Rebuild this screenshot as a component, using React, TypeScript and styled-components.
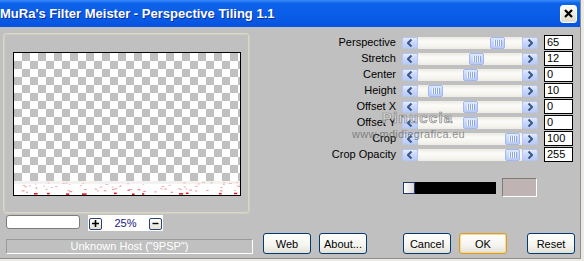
import React from "react";
import styled, { createGlobalStyle } from "styled-components";

const Global = createGlobalStyle`
  html, body { margin: 0; padding: 0; background: #ebeae4; }
  body { font-family: "Liberation Sans", Arial, sans-serif; }
`;

const Page = styled.div`
  width: 584px;
  height: 261px;
  overflow: hidden;
  background: #ebeae4;
`;

const Window = styled.div`
  position: relative;
  width: 580px;
  height: 258px;
  background: #c0c0c0;
  border-right: 1px solid #8d8d8d;
  border-bottom: 1px solid #8d8d8d;
  display: flex;
  flex-direction: column;
`;

const TitleBar = styled.div`
  height: 27px;
  flex: none;
  display: flex;
  align-items: center;
  justify-content: space-between;
  padding-right: 3px;
  background: linear-gradient(180deg, #3a8cf8 0%, #0d62ea 12%, #0a5de6 55%, #0654e0 100%);
`;

const Title = styled.div`
  font-family: "Liberation Sans", Arial, sans-serif;
  font-weight: bold;
  font-size: 13px;
  color: #ffffff;
  text-shadow: 1px 1px 0 #0b2f9c;
  white-space: nowrap;
`;

const CloseButton = styled.div`
  width: 17px;
  height: 18px;
  box-sizing: border-box;
  border: 1px solid #ffffff;
  border-radius: 3px;
  background: linear-gradient(180deg, #fbfaf5 0%, #ece9dd 60%, #ddd9ca 100%);
  display: flex;
  align-items: center;
  justify-content: center;
`;

const Body = styled.div`
  flex: 1;
  display: flex;
  gap: 10px;
  padding-left: 3px;
`;

const LeftCol = styled.div`
  width: 250px;
  display: flex;
  flex-direction: column;
`;

const GroupFrame = styled.div`
  margin-top: 6px;
  width: 246px;
  height: 180px;
  box-sizing: border-box;
  border: 1px solid #d8d7ca;
  border-radius: 3px;
  box-shadow: inset 1px 1px 0 #cdccbd, 1px 1px 0 #cdccbd;
  padding: 18px 8px 0 9px;
`;

const Canvas = styled.div`
  width: 228px;
  height: 144px;
  box-sizing: border-box;
  border: 1px solid #000;
  background: repeating-conic-gradient(#c0c0c0 0 25%, #ffffff 0 50%) 0 0 / 16px 16px;
  display: flex;
  flex-direction: column;
  justify-content: flex-end;
`;

const ZoomRow = styled.div`
  margin-top: 2px;
  padding-left: 3px;
  height: 16px;
  display: flex;
  align-items: flex-start;
`;

const ZoomInput = styled.div`
  width: 74px;
  height: 14px;
  box-sizing: border-box;
  background: #fff;
  border: 1px solid #7c7c7c;
  border-radius: 3px;
`;

const ZoomStrip = styled.div`
  margin-left: 8px;
  width: 75px;
  height: 16px;
  background: #fff;
  display: flex;
  align-items: center;
  justify-content: space-between;
  padding: 0 1px;
  box-sizing: border-box;
`;

const SmallBtn = styled.div`
  width: 13px;
  height: 12px;
  box-sizing: border-box;
  border: 1px solid #28456f;
  border-radius: 2px;
  background: linear-gradient(180deg, #ffffff, #e4e1d6);
  display: flex;
  align-items: center;
  justify-content: center;
  margin-top: 1px;
`;

const Percent = styled.span`
  font-size: 11px;
  color: #17177c;
`;

const Status = styled.div`
  margin-top: 8px;
  margin-left: 3px;
  width: 247px;
  height: 15px;
  box-sizing: border-box;
  border-top: 1px solid #9a9a9a;
  border-left: 1px solid #9a9a9a;
  border-right: 1px solid #ffffff;
  border-bottom: 1px solid #ffffff;
  color: #ffffff;
  font-size: 11px;
  line-height: 13px;
  text-align: center;
`;

const RightCol = styled.div`
  width: 313px;
  display: flex;
  flex-direction: column;
  padding-top: 8px;
`;

const SliderGrid = styled.div`
  display: grid;
  grid-template-columns: 133px 136px 29px;
  column-gap: 6px;
  grid-auto-rows: 15px;
  row-gap: 1px;
  align-items: center;
`;

const Label = styled.div`
  font-size: 11px;
  color: #000;
  text-align: right;
  white-space: nowrap;
  line-height: 15px;
`;

const ScrollBar = styled.div`
  display: flex;
  height: 12px;
  margin-right: 3px;
  width: 136px;
`;

const ArrowBtn = styled.div`
  width: 16px;
  height: 12px;
  flex: none;
  box-sizing: border-box;
  border: 1px solid #b5c7f1;
  border-radius: 2px;
  background: linear-gradient(180deg, #e2eafd 0%, #c8d7fb 50%, #b9cbf6 100%);
  display: flex;
  align-items: center;
  justify-content: center;
`;

const Track = styled.div`
  flex: 1;
  position: relative;
  background: linear-gradient(180deg, #ebeae2 0%, #fbfbf8 35%, #f6f5f0 70%, #ecebe3 100%);
`;

const Thumb = styled.div`
  position: absolute;
  top: 0;
  width: 15px;
  height: 12px;
  box-sizing: border-box;
  border: 1px solid #a3b8ec;
  border-radius: 2px;
  background: linear-gradient(180deg, #dfe8fd 0%, #c6d6fb 50%, #b8caf6 100%);
  display: flex;
  align-items: center;
  justify-content: center;
`;

const Grip = styled.div`
  width: 8px;
  height: 6px;
  background: repeating-linear-gradient(90deg, #eef3ff 0 1px, #8ea8e4 1px 2px);
`;

const ValueBox = styled.div`
  width: 29px;
  height: 15px;
  box-sizing: border-box;
  background: #fff;
  border: 1px solid #000;
  font-size: 11px;
  line-height: 13px;
  padding-left: 2px;
  color: #000;
`;

const ColorRow = styled.div`
  margin-top: 16px;
  height: 19px;
  display: flex;
  align-items: center;
  padding-left: 140px;
`;

const ColorHandle = styled.div`
  width: 12px;
  height: 12px;
  box-sizing: border-box;
  border: 1px solid #1c3b6a;
  background: linear-gradient(90deg, #ffffff, #d8d8d8);
`;

const BlackBar = styled.div`
  width: 81px;
  height: 12px;
  background: #000;
`;

const Swatch = styled.div`
  margin-left: 6px;
  width: 35px;
  height: 19px;
  box-sizing: border-box;
  background: #c0b3b3;
  border-top: 1px solid #7c7c72;
  border-left: 1px solid #7c7c72;
  border-right: 1px solid #ffffff;
  border-bottom: 1px solid #ffffff;
`;

const ButtonRow = styled.div`
  margin-top: 36px;
  display: flex;
  height: 21px;
`;

const Button = styled.div<{ $before: number; $default?: boolean }>`
  margin-left: ${(p) => p.$before}px;
  width: 48px;
  height: 21px;
  box-sizing: border-box;
  border: 1px solid ${(p) => (p.$default ? "#d99a31" : "#003c74")};
  border-radius: 3px;
  background: linear-gradient(180deg, #ffffff 0%, #f5f4ef 60%, #e3e0d5 100%);
  box-shadow: ${(p) => (p.$default ? "inset 0 0 0 1px #fbd98c" : "none")};
  font-size: 11px;
  color: #000;
  display: flex;
  align-items: center;
  justify-content: center;
`;

const Watermark = styled.div`
  position: absolute;
  left: 352px;
  top: 109px;
  pointer-events: none;
  display: flex;
  flex-direction: column;
  align-items: flex-start;
`;

const WmName = styled.div`
  margin-left: 30px;
  font-size: 15px;
  letter-spacing: 1.2px;
  color: rgba(226, 226, 226, 0.85);
  -webkit-text-stroke: 0.7px rgba(105, 105, 105, 0.75);
  font-weight: bold;
`;

const WmUrl = styled.div`
  margin-top: 2px;
  font-size: 11px;
  letter-spacing: 0.3px;
  color: rgba(105, 105, 105, 0.75);
`;

type Row = { label: string; value: string; thumb: number };

const rows: Row[] = [
  { label: "Perspective", value: "65", thumb: 72 },
  { label: "Stretch", value: "12", thumb: 51 },
  { label: "Center", value: "0", thumb: 45 },
  { label: "Height", value: "10", thumb: 10 },
  { label: "Offset X", value: "0", thumb: 45 },
  { label: "Offset Y", value: "0", thumb: 45 },
  { label: "Crop", value: "100", thumb: 87 },
  { label: "Crop Opacity", value: "255", thumb: 87 },
];

const Arrow = ({ dir }: { dir: "left" | "right" }) => (
  <svg width="6" height="8" viewBox="0 0 6 8">
    {dir === "left" ? (
      <path d="M4.5 0.5 L1 4 L4.5 7.5" fill="none" stroke="#3d5687" strokeWidth="2" />
    ) : (
      <path d="M1.5 0.5 L5 4 L1.5 7.5" fill="none" stroke="#3d5687" strokeWidth="2" />
    )}
  </svg>
);

const Speckles = () => {
  let seed = 17;
  const rnd = () => {
    seed = (seed * 1103515245 + 12345) % 2147483648;
    return seed / 2147483648;
  };
  const dots: React.ReactElement[] = [];
  for (let i = 0; i < 70; i++) {
    const y = 1 + rnd() * 10;
    const x = rnd() * 226;
    const w = 1 + rnd() * 2;
    const op = 0.2 + (y / 11) * 0.45;
    dots.push(<rect key={"a" + i} x={x} y={y} width={w} height={1} fill="#e0303a" opacity={op} />);
  }
  const bottom = [20, 33, 52, 68, 100, 118, 128, 165, 172, 205, 220];
  bottom.forEach((x, i) => {
    dots.push(
      <rect key={"b" + i} x={x} y={11.5 + rnd()} width={2 + rnd() * 3} height={1.5} fill="#e0101c" />
    );
  });
  return (
    <svg width="226" height="14" viewBox="0 0 226 14" style={{ display: "block", background: "#fff" }}>
      <rect x="0" y="0" width="226" height="3" fill="#f4f1f1" />
      {dots}
    </svg>
  );
};

export default function App() {
  return (
    <Page>
      <Global />
      <Window>
        <TitleBar>
          <Title>MuRa's Filter Meister - Perspective Tiling 1.1</Title>
          <CloseButton>
            <svg width="9" height="9" viewBox="0 0 9 9">
              <path d="M1 1 L8 8 M8 1 L1 8" stroke="#000" strokeWidth="2.2" />
            </svg>
          </CloseButton>
        </TitleBar>
        <Body>
          <LeftCol>
            <GroupFrame>
              <Canvas>
                <Speckles />
              </Canvas>
            </GroupFrame>
            <ZoomRow>
              <ZoomInput />
              <ZoomStrip>
                <SmallBtn>
                  <svg width="7" height="7" viewBox="0 0 7 7">
                    <path d="M0 3.5 H7 M3.5 0 V7" stroke="#000" strokeWidth="1.6" />
                  </svg>
                </SmallBtn>
                <Percent>25%</Percent>
                <SmallBtn>
                  <svg width="7" height="7" viewBox="0 0 7 7">
                    <path d="M0.5 3.5 H6.5" stroke="#000" strokeWidth="1.4" />
                  </svg>
                </SmallBtn>
              </ZoomStrip>
            </ZoomRow>
            <Status>Unknown Host ("9PSP")</Status>
          </LeftCol>
          <RightCol>
            <SliderGrid>
              {rows.map((r) => (
                <React.Fragment key={r.label}>
                  <Label>{r.label}</Label>
                  <ScrollBar>
                    <ArrowBtn>
                      <Arrow dir="left" />
                    </ArrowBtn>
                    <Track>
                      <Thumb style={{ left: r.thumb }}>
                        <Grip />
                      </Thumb>
                    </Track>
                    <ArrowBtn>
                      <Arrow dir="right" />
                    </ArrowBtn>
                  </ScrollBar>
                  <ValueBox>{r.value}</ValueBox>
                </React.Fragment>
              ))}
            </SliderGrid>
            <ColorRow>
              <ColorHandle />
              <BlackBar />
              <Swatch />
            </ColorRow>
            <ButtonRow>
              <Button $before={0}>Web</Button>
              <Button $before={8}>About...</Button>
              <Button $before={36}>Cancel</Button>
              <Button $before={8} $default>
                OK
              </Button>
              <Button $before={20}>Reset</Button>
            </ButtonRow>
          </RightCol>
        </Body>
        <Watermark>
          <WmName>Pinuccia</WmName>
          <WmUrl>www.mdidiegrafica.eu</WmUrl>
        </Watermark>
      </Window>
    </Page>
  );
}
